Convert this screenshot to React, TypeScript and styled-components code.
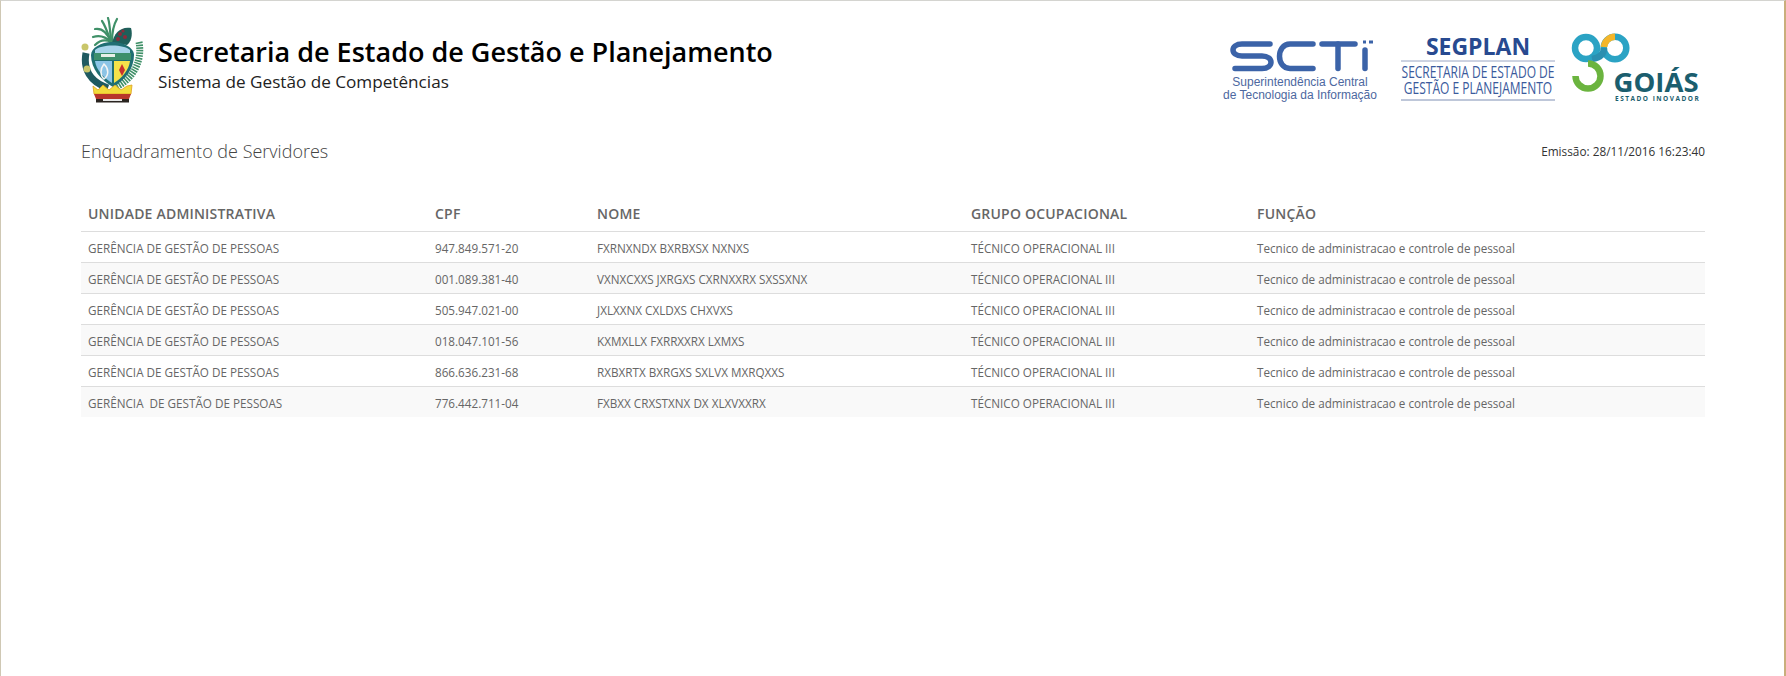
import styled, { createGlobalStyle } from "styled-components";

const GlobalStyle = createGlobalStyle`
    html, body {
        margin: 0;
        padding: 0;
        background: #fff;
    }
`;

const Page = styled.div`
    box-sizing: border-box;
    height: 676px;
    overflow: hidden;
    border-top: 1px solid #d4d4d0;
    border-left: 1px solid #cfc8b4;
    border-right: 2px solid #c9ae7c;
    padding: 16px 79px 0 80px;
    font-family: "Open Sans", sans-serif;
    color: #333;
`;

const Header = styled.header`
    display: flex;
    justify-content: space-between;
    height: 88px;
`;

const Brand = styled.div`
    display: flex;
    align-items: flex-start;
    gap: 13px;
`;

const BrandText = styled.div`
    display: flex;
    flex-direction: column;
    padding-top: 17px;
`;

const Title = styled.h1`
    margin: 0;
    font-size: 27px;
    line-height: 36px;
    font-weight: 600;
    color: #000;
`;

const Subtitle = styled.div`
    font-size: 17.15px;
    line-height: 23px;
    color: #222;
`;

const Logos = styled.div`
    display: flex;
    align-items: flex-start;
    padding-top: 16px;
`;

const TitleRow = styled.div`
    display: flex;
    justify-content: space-between;
    align-items: center;
    height: 28px;
    margin-top: 32px;
`;

const PageTitle = styled.h2`
    margin: 0;
    font-size: 18px;
    font-weight: 300;
    color: #444;
`;

const Emission = styled.div`
    font-size: 11.8px;
    color: #333;
`;

const Table = styled.table`
    width: 100%;
    margin-top: 32px;
    border-collapse: collapse;
    table-layout: fixed;
`;

const HeadCell = styled.th<{ $width?: number }>`
    width: ${(p) => (p.$width ? `${p.$width}px` : "auto")};
    height: 34px;
    padding: 0 7px;
    box-sizing: border-box;
    text-align: left;
    font-size: 14px;
    font-weight: 600;
    letter-spacing: 0.2px;
    color: #666;
`;

const Row = styled.tr<{ $striped: boolean }>`
    background: ${(p) => (p.$striped ? "#f9f9f9" : "#fff")};
`;

const Cell = styled.td`
    height: 31px;
    padding: 2px 7px 0;
    box-sizing: border-box;
    font-size: 11.7px;
    color: #666;
    white-space: pre;
    border-top: 1px solid #ddd;
`;

const Crest = () => (
    <svg width="64" height="86" viewBox="0 0 64 86">
        {/* palm */}
        <g stroke="#3f9068" strokeWidth="2.2" fill="none" strokeLinecap="round">
            <path d="M30 25 C26 15 20 11 14 12" />
            <path d="M30 25 C24 19 18 18 12 20" />
            <path d="M30 25 C24 22 18 24 14 28" />
            <path d="M30 25 C26 14 24 8 21 4" />
            <path d="M30 25 C29 14 29 7 27 1" />
            <path d="M31 25 C31 14 33 7 36 2" />
        </g>
        <path d="M31 26 C33 16 40 9 50 11 C52 18 50 25 46 28 Z" fill="#1f5f5a" />
        <circle cx="39" cy="17" r="2" fill="#8e2b3a" />
        <circle cx="44" cy="20" r="2" fill="#8e2b3a" />
        <circle cx="37" cy="22" r="2" fill="#8e2b3a" />
        <circle cx="42" cy="14" r="1.6" fill="#8e2b3a" />
        {/* branches */}
        <path d="M5 36 C2 52 9 65 27 71" stroke="#1f5a60" strokeWidth="7" fill="none" />
        <path d="M58 25 C62 46 50 63 35 70" stroke="#3f9068" strokeWidth="7" strokeDasharray="1.6 1" fill="none" />
        {/* shield */}
        <path d="M10 38 C10 31 20 25 31 25 C43 25 53 31 53 38 C53 52 44 63 32 70 C20 63 10 52 10 38 Z" fill="#1f6f73" />
        <path d="M14 33 C20 27 43 27 49 33 L49 36 L14 36 Z" fill="#a7d4ea" />
        <rect x="13" y="36" width="37" height="7" fill="#3d8f6b" />
        <rect x="20" y="37" width="14" height="3" fill="#e8efe8" />
        <path d="M14 44 L31 44 L31 66 C23 61 15 53 14 44 Z" fill="#8cc4e6" />
        <path d="M33 44 L49 44 C48 53 41 61 33 66 Z" fill="#f4e24a" />
        <path d="M41 47 L44 53 L41 59 L38 53 Z" fill="#c8322d" />
        <path d="M23 47 C28 52 28 58 23 62 C19 58 19 52 23 47 Z" fill="none" stroke="#f4f4f4" strokeWidth="1.5" />
        <circle cx="4" cy="30" r="3.5" fill="#c9c66a" />
        <circle cx="6" cy="52" r="3.5" fill="#c9c66a" />
        {/* base */}
        <path d="M12 69 L17 73 L22 68 L28 73 L34 68 L40 73 L46 69 L51 68 L50 77 L13 77 Z" fill="#f2dc3c" stroke="#e0a020" strokeWidth="0.8" />
        <path d="M13 77 L50 77 L48 82 L15 82 Z" fill="#b8352b" />
        <rect x="15" y="82" width="33" height="3.5" fill="#2a2420" />
        <rect x="22" y="82" width="19" height="2" fill="#e8e8e8" />
    </svg>
);

const SctiLogo = () => (
    <svg width="164" height="72" viewBox="0 0 164 72">
        <g stroke="#3b63a8" strokeWidth="5.5" fill="none" strokeLinecap="round" strokeLinejoin="round">
            <path d="M52 11 H24 C12 11 12 23 24 23 H44 C56 23 56 35.5 44 35.5 H17" />
            <path d="M95 11 H72 C58 11 58 35.5 72 35.5 H95" />
            <path d="M104 11 H137" />
            <path d="M120 11 V35.5" />
            <path d="M147 17 V35.5" />
        </g>
        <path d="M151 9 H155 M145 9 H148" stroke="#3b63a8" strokeWidth="3" />
        <text x="82" y="53" textAnchor="middle" fontFamily="Liberation Sans" fontSize="12" fill="#4d68a0">Superintendência Central</text>
        <text x="82" y="66" textAnchor="middle" fontFamily="Liberation Sans" fontSize="12" fill="#4d68a0">de Tecnologia da Informação</text>
    </svg>
);

const SegplanLogo = () => (
    <svg width="154" height="72" viewBox="0 0 154 72" style={{ marginLeft: 19 }}>
        <text x="77" y="22" textAnchor="middle" fontFamily="Open Sans" fontWeight="700" fontSize="23" fill="#284a90">SEGPLAN</text>
        <line x1="0" y1="28" x2="154" y2="28" stroke="#9aa6c4" />
        <text transform="translate(77 45) scale(0.75 1)" textAnchor="middle" fontFamily="Open Sans" fontSize="16" fill="#3a5a9c">SECRETARIA DE ESTADO DE</text>
        <text transform="translate(77 61) scale(0.75 1)" textAnchor="middle" fontFamily="Open Sans" fontSize="16" fill="#3a5a9c">GESTÃO E PLANEJAMENTO</text>
        <line x1="0" y1="67" x2="154" y2="67" stroke="#7f8fb4" />
    </svg>
);

const GoiasLogo = () => (
    <svg width="135" height="72" viewBox="0 0 135 72" style={{ marginLeft: 15 }}>
        <g fill="none" strokeWidth="6.5">
            <circle cx="16" cy="15" r="11" stroke="#2ba3c4" />
            <circle cx="45" cy="15" r="11.3" stroke="#2ba3c4" />
            <path d="M34 14 A11.3 11.3 0 0 1 45 3.7" stroke="#f5b62a" />
            <path d="M34 15 C34 22 29 25 22 26" stroke="#2b8fb0" />
            <path d="M18 30.5 A12.5 12.5 0 1 1 5.5 43" stroke="#6bb43f" />
        </g>
        <text x="43.5" y="59" fontFamily="Open Sans" fontWeight="700" fontSize="27.5" fill="#1b5e6e">GOIÁS</text>
        <text x="45" y="68" fontFamily="Open Sans" fontWeight="700" fontSize="6.5" letterSpacing="1.5" fill="#1b5e6e">ESTADO INOVADOR</text>
    </svg>
);

const rows = [
    ["GERÊNCIA DE GESTÃO DE PESSOAS", "947.849.571-20", "FXRNXNDX BXRBXSX NXNXS"],
    ["GERÊNCIA DE GESTÃO DE PESSOAS", "001.089.381-40", "VXNXCXXS JXRGXS CXRNXXRX SXSSXNX"],
    ["GERÊNCIA DE GESTÃO DE PESSOAS", "505.947.021-00", "JXLXXNX CXLDXS CHXVXS"],
    ["GERÊNCIA DE GESTÃO DE PESSOAS", "018.047.101-56", "KXMXLLX FXRRXXRX LXMXS"],
    ["GERÊNCIA DE GESTÃO DE PESSOAS", "866.636.231-68", "RXBXRTX BXRGXS SXLVX MXRQXXS"],
    ["GERÊNCIA  DE GESTÃO DE PESSOAS", "776.442.711-04", "FXBXX CRXSTXNX DX XLXVXXRX"],
];

const App = () => {
    return (
        <Page>
            <GlobalStyle />
            <Header>
                <Brand>
                    <Crest />
                    <BrandText>
                        <Title>Secretaria de Estado de Gestão e Planejamento</Title>
                        <Subtitle>Sistema de Gestão de Competências</Subtitle>
                    </BrandText>
                </Brand>
                <Logos>
                    <SctiLogo />
                    <SegplanLogo />
                    <GoiasLogo />
                </Logos>
            </Header>
            <TitleRow>
                <PageTitle>Enquadramento de Servidores</PageTitle>
                <Emission>Emissão: 28/11/2016 16:23:40</Emission>
            </TitleRow>
            <Table>
                <thead>
                    <tr>
                        <HeadCell $width={347}>UNIDADE ADMINISTRATIVA</HeadCell>
                        <HeadCell $width={162}>CPF</HeadCell>
                        <HeadCell $width={374}>NOME</HeadCell>
                        <HeadCell $width={286}>GRUPO OCUPACIONAL</HeadCell>
                        <HeadCell>FUNÇÃO</HeadCell>
                    </tr>
                </thead>
                <tbody>
                    {rows.map((row, i) => (
                        <Row key={row[1]} $striped={i % 2 === 1}>
                            <Cell>{row[0]}</Cell>
                            <Cell>{row[1]}</Cell>
                            <Cell>{row[2]}</Cell>
                            <Cell>TÉCNICO OPERACIONAL III</Cell>
                            <Cell>Tecnico de administracao e controle de pessoal</Cell>
                        </Row>
                    ))}
                </tbody>
            </Table>
        </Page>
    );
};

export default App;
